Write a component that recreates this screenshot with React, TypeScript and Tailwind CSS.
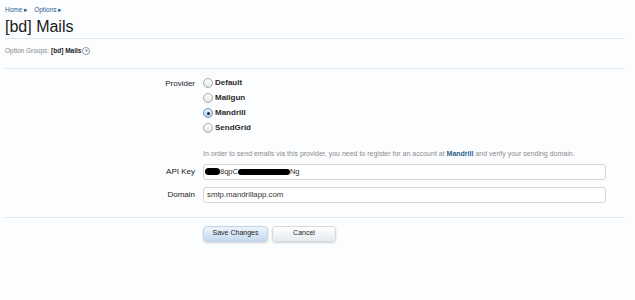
import React from "react";

const font = { fontFamily: '"Liberation Sans", Arial, sans-serif' };

function Radio({ label, checked }: { label: string; checked?: boolean }) {
  return (
    <label className="flex h-[15px] items-center gap-[2px]">
      <span
        className={
          "flex h-[10px] w-[10px] items-center justify-center rounded-full border " +
          (checked
            ? "border-[#6c93bd] bg-[linear-gradient(#e6f0fa,#b9d2ec)]"
            : "border-[#a9a9a9] bg-[linear-gradient(#ffffff,#e4e4e4)]")
        }
      >
        {checked && <span className="h-[3px] w-[3px] rounded-full bg-[#1d2b3a]" />}
      </span>
      <span className="text-[8px] font-bold text-[#2a2a2a]">{label}</span>
    </label>
  );
}

function Row({ label, children }: { label?: string; children: React.ReactNode }) {
  return (
    <div className="flex">
      <div className="w-[190px] text-right text-[8px] leading-[16px] text-[#222]">{label}</div>
      <div className="ml-[8px] w-[403px]">{children}</div>
    </div>
  );
}

export default function App() {
  return (
    <div className="h-[300px] w-[635px] bg-[#fcfdff] px-[5px] text-[#222]" style={font}>
      <div className="flex h-[15px] items-end gap-[6px] text-[6.5px] text-[#2b5d8c]">
        <span>Home ▸</span>
        <span>Options ▸</span>
      </div>
      <h1 className="pt-[4px] pb-[3px] text-[16px] leading-[16px] text-[#1a1a1a]">[bd] Mails</h1>
      <div className="mr-[5px] border-b border-[#dbe8f3]" />
      <div className="flex h-[23px] items-center text-[6.5px] text-[#888]">
        Option Groups:
        <span className="ml-[2px] font-bold text-[#222]">[bd] Mails</span>
        <span className="ml-[1px] flex h-[8px] w-[8px] items-center justify-center rounded-full border border-[#999] bg-white text-[4px] text-[#666]">
          ▼
        </span>
      </div>
      <div className="mt-[6px] mr-[5px] border-b border-[#dbe8f3]" />

      <div className="mt-[7px] flex flex-col">
        <Row label="Provider">
          <div className="-mt-[0.5px] flex flex-col">
            <Radio label="Default" />
            <Radio label="Mailgun" />
            <Radio label="Mandrill" checked />
            <Radio label="SendGrid" />
          </div>
        </Row>
        <Row>
          <p className="mt-[12px] mb-[4px] text-[7px] leading-[12px] text-[#8a8a8a]">
            In order to send emails via this provider, you need to register for an account at{" "}
            <span className="font-bold text-[#2b5d8c]">Mandrill</span> and verify your sending domain.
          </p>
        </Row>
        <Row label="API Key">
          <div className="flex h-[16px] items-center rounded-[3px] border border-[#d6d6d6] bg-white px-[1px] text-[7.5px] text-[#333]">
            <span className="h-[7px] w-[15px] rounded-full bg-black" />
            <span>8qpC</span>
            <span className="h-[6px] w-[52px] rounded-full bg-black" />
            <span>Ng</span>
          </div>
        </Row>
        <div className="h-[7px]" />
        <Row label="Domain">
          <div className="flex h-[16px] items-center rounded-[3px] border border-[#d6d6d6] bg-white px-[3px] text-[7.8px] text-[#333]">
            smtp.mandrillapp.com
          </div>
        </Row>
      </div>

      <div className="mt-[14px] mr-[5px] border-b border-[#dbe8f3]" />
      <div className="mt-[8px] flex gap-[4px] pl-[198px]">
        <button className="h-[16px] w-[65px] rounded-[4px] border border-[#c3d4e4] bg-[linear-gradient(#edf4fb,#c4d9ee)] text-[7px] text-[#222] shadow-[0_1px_2px_rgba(0,0,0,0.18)]">
          Save Changes
        </button>
        <button className="h-[16px] w-[64px] rounded-[4px] border border-[#d6dade] bg-[linear-gradient(#ffffff,#e6e9ee)] text-[7px] text-[#222] shadow-[0_1px_2px_rgba(0,0,0,0.18)]">
          Cancel
        </button>
      </div>
    </div>
  );
}
